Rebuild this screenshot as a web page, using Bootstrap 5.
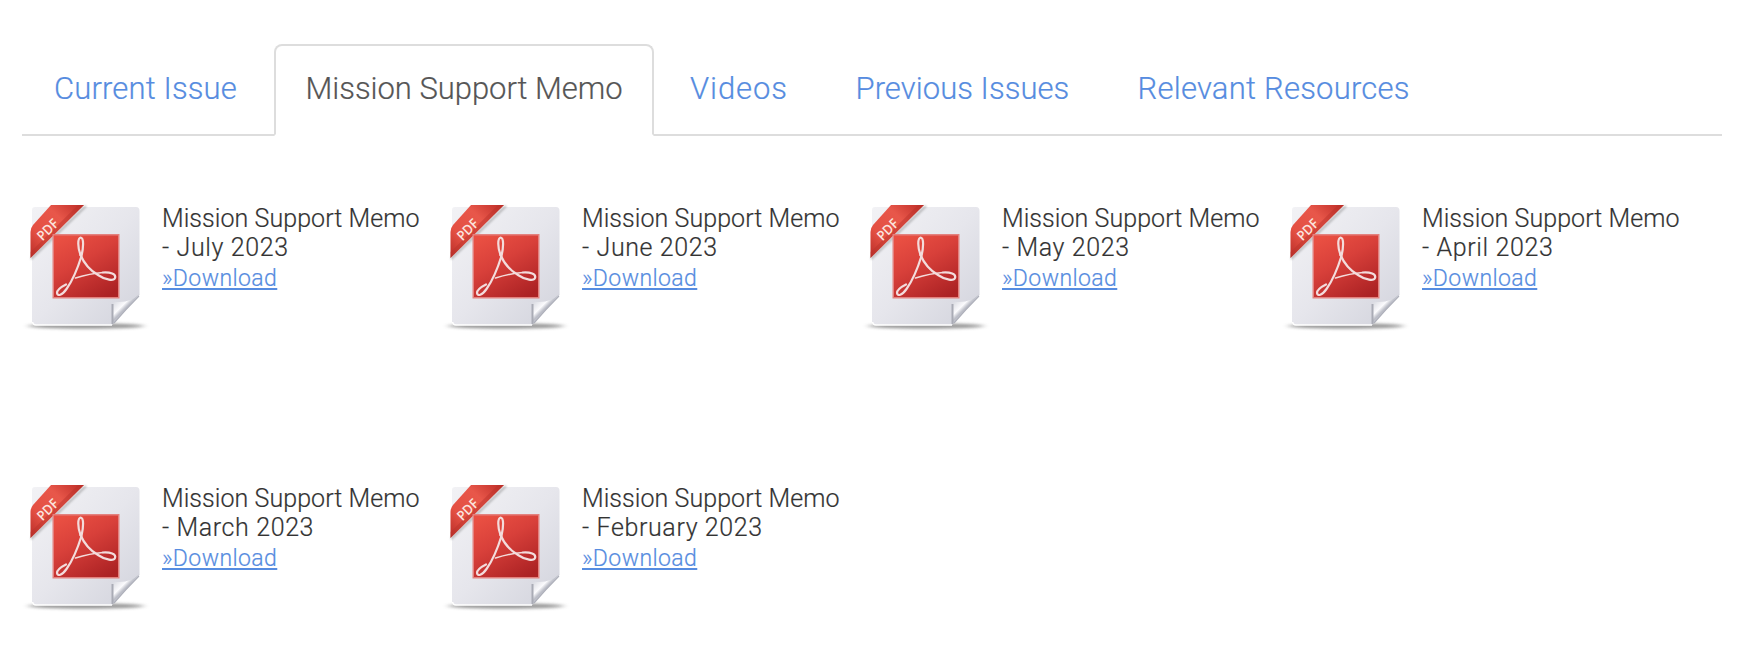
<!DOCTYPE html>
<html lang="en">
<head>
<meta charset="utf-8">
<meta name="viewport" content="width=device-width, initial-scale=1">
<title>Mission Support Memo</title>
<link href="https://cdn.jsdelivr.net/npm/bootstrap@5.3.0/dist/css/bootstrap.min.css" rel="stylesheet">
<style>
  body { font-family: Roboto, "Liberation Sans", sans-serif; font-weight: 300; color: #333; background: #fff; -webkit-text-stroke: .2px; }
  .page { padding: 44px 20px 0 22px; }
  .issue-tabs { border-bottom: 2px solid #ddd; height: 92px; flex-wrap: nowrap; }
  .issue-tabs .nav-link {
    height: 92px; padding: 25px 0 0 30px; border: 2px solid transparent; margin-bottom: -2px;
    border-radius: 8px 8px 0 0; font-size: 31px; line-height: 36px; color: #568ce0; white-space: nowrap;
  }
  .issue-tabs .nav-link.active { color: #555; border-color: #ddd #ddd #fff; background: #fff; }
  .tab-current { width: 252px; letter-spacing: .14px; }
  .issue-tabs .tab-memo { width: 380px; padding-left: 29.5px; letter-spacing: -.03px; }
  .tab-videos { width: 165.5px; margin-left: 4px; letter-spacing: .9px; }
  .tab-previous { width: 282px; letter-spacing: .05px; }
  .tab-relevant { letter-spacing: .23px; }
  .memo-grid { display: grid; grid-template-columns: repeat(4, 420px); grid-template-rows: 280px auto; margin: 59px 0 0 -2px; }
  .pdf-icon { width: 140px; height: 145px; flex: none; }
  .memo-text { padding: 9px 0 0 2px; }
  .memo-title { font-size: 25px; line-height: 29px; font-weight: 300; letter-spacing: .06px; margin: 0; white-space: nowrap; }
  .memo-month { letter-spacing: .62px; }
  .memo-link { display: inline-block; font-size: 23px; line-height: 28px; margin-top: 3px; color: #568ce0;
    text-decoration-thickness: 2px; text-underline-offset: 2px; text-decoration-skip-ink: none; letter-spacing: .41px; }
</style>
</head>
<body>
<svg width="0" height="0" class="position-absolute" aria-hidden="true">
  <defs>
    <linearGradient id="sheet" x1="0" y1="0" x2="1" y2="1"><stop offset="0" stop-color="#f2f2f5"/><stop offset=".5" stop-color="#e6e6ec"/><stop offset="1" stop-color="#d2d3dc"/></linearGradient>
    <linearGradient id="panel" x1=".2" y1="0" x2=".8" y2="1"><stop offset="0" stop-color="#e94f42"/><stop offset=".4" stop-color="#d8403a"/><stop offset="1" stop-color="#ac2224"/></linearGradient>
    <linearGradient id="ribbon" x1="0" y1="1" x2="1" y2="0"><stop offset="0" stop-color="#b92d28"/><stop offset=".3" stop-color="#e45043"/><stop offset=".65" stop-color="#e8574a"/><stop offset="1" stop-color="#bd2c26"/></linearGradient>
    <linearGradient id="curl" gradientUnits="userSpaceOnUse" x1="94" y1="106" x2="107" y2="119"><stop offset="0" stop-color="#d9dae1"/><stop offset=".5" stop-color="#fbfbfd"/><stop offset=".72" stop-color="#b9bbc5"/><stop offset="1" stop-color="#e4e5eb"/></linearGradient>
    <filter id="soft" x="-10%" y="-100%" width="120%" height="300%"><feGaussianBlur stdDeviation="3 1.4"/></filter>
    <filter id="edge"><feGaussianBlur stdDeviation=".9"/></filter>
    <symbol id="pdf" viewBox="0 0 140 145">
      <ellipse cx="66" cy="131" rx="58" ry="2.800" fill="#555" opacity=".6" filter="url(#soft)"/>
      <path d="M15 12H116Q119.500 12 119.500 16V100L92 130H15Q12 130 12 127V15Q12 12 15 12Z" fill="url(#sheet)"/>
      <path d="M12.500 127Q13 130 16 130H92" fill="none" stroke="#fff" stroke-width="1.500"/>
      <path d="M92 130V109Q93 106 97 107Q110 108 119.500 99Z" fill="url(#curl)"/>
      <path d="M92.500 129V109" stroke="#a9abb5" stroke-width="2"/>
      <path d="M94 128Q106 114 119 101" fill="none" stroke="#aeb0ba" stroke-width="1.200"/>
      <path d="M11 64L66 11" stroke="#777" stroke-width="2" opacity=".5" filter="url(#edge)"/>
      <path d="M31 10H64L10.500 63V37Q10.500 33 13 30Z" fill="url(#ribbon)"/>
      <path d="M10.500 63V57L58 10H64Z" fill="#b9302a" opacity=".45"/>
      <text transform="translate(22.500 46.500) rotate(-45)" font-family="Open Sans, sans-serif" font-size="13.500" font-weight="600" fill="#fbe4df" textLength="24" lengthAdjust="spacingAndGlyphs">PDF</text>
      <rect x="32.500" y="39" width="67" height="64.500" fill="#e3817e"/>
      <rect x="34" y="40.500" width="64" height="61.500" fill="url(#panel)"/>
      <g fill="none" stroke="#f3dcdc" stroke-linecap="round" stroke-linejoin="round" stroke-width="2.200">
        <path d="M60.500 60C57.500 52 57.500 43 60.700 42.500C64 43 63.500 52 61.500 61Q55 82 46.500 94C42 100.500 37.500 101.500 37 98C37 94.500 41 92 46 89.500"/>
        <path d="M60.500 60Q66 73 78 80C86 85.500 94 86 95 83C96.500 79 90 77 83 77.500" />
        <path d="M83 77.500Q70 78.500 55.500 83" stroke-width="1.600"/>
      </g>
    </symbol>
  </defs>
</svg>
<main class="page">
  <ul class="nav nav-tabs issue-tabs">
    <li class="nav-item"><a class="nav-link tab-current" href="#">Current Issue</a></li>
    <li class="nav-item"><a class="nav-link active tab-memo" aria-current="page" href="#">Mission Support Memo</a></li>
    <li class="nav-item"><a class="nav-link tab-videos" href="#">Videos</a></li>
    <li class="nav-item"><a class="nav-link tab-previous" href="#">Previous Issues</a></li>
    <li class="nav-item"><a class="nav-link tab-relevant" href="#">Relevant Resources</a></li>
  </ul>
  <section class="memo-grid">
    <article class="d-flex align-items-start"><svg class="pdf-icon"><use href="#pdf"/></svg><div class="memo-text"><h2 class="memo-title">Mission Support Memo<br><span class="memo-month">- July 2023</span></h2><a class="memo-link" href="#">»Download</a></div></article>
    <article class="d-flex align-items-start"><svg class="pdf-icon"><use href="#pdf"/></svg><div class="memo-text"><h2 class="memo-title">Mission Support Memo<br><span class="memo-month">- June 2023</span></h2><a class="memo-link" href="#">»Download</a></div></article>
    <article class="d-flex align-items-start"><svg class="pdf-icon"><use href="#pdf"/></svg><div class="memo-text"><h2 class="memo-title">Mission Support Memo<br><span class="memo-month">- May 2023</span></h2><a class="memo-link" href="#">»Download</a></div></article>
    <article class="d-flex align-items-start"><svg class="pdf-icon"><use href="#pdf"/></svg><div class="memo-text"><h2 class="memo-title">Mission Support Memo<br><span class="memo-month">- April 2023</span></h2><a class="memo-link" href="#">»Download</a></div></article>
    <article class="d-flex align-items-start"><svg class="pdf-icon"><use href="#pdf"/></svg><div class="memo-text"><h2 class="memo-title">Mission Support Memo<br><span class="memo-month">- March 2023</span></h2><a class="memo-link" href="#">»Download</a></div></article>
    <article class="d-flex align-items-start"><svg class="pdf-icon"><use href="#pdf"/></svg><div class="memo-text"><h2 class="memo-title">Mission Support Memo<br><span class="memo-month">- February 2023</span></h2><a class="memo-link" href="#">»Download</a></div></article>
  </section>
</main>
<script src="https://cdn.jsdelivr.net/npm/bootstrap@5.3.0/dist/js/bootstrap.bundle.min.js"></script>
</body>
</html>
